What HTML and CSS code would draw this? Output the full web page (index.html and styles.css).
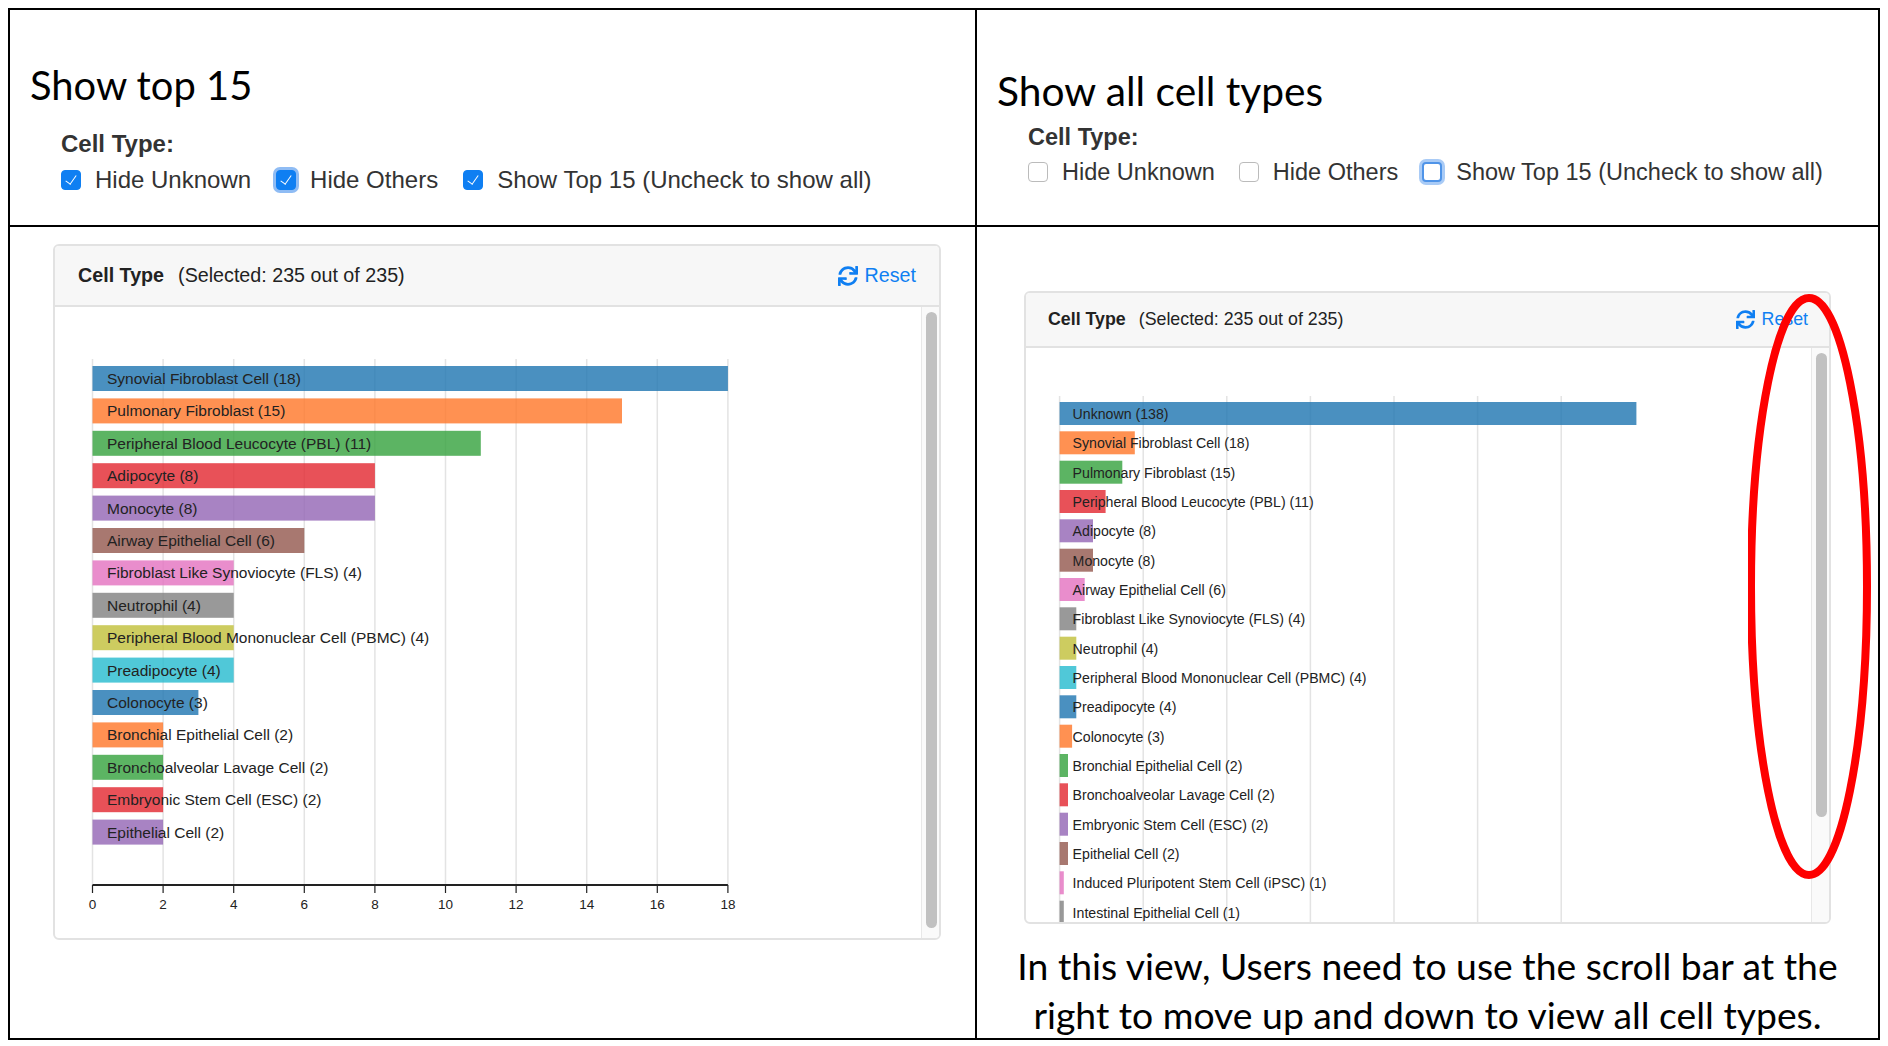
FILE: index.html
```html
<!DOCTYPE html>
<html lang="en">
<head>
    <meta charset="UTF-8">
    <title>Cell type filter</title>
    <link rel="stylesheet" href="styles.css">
</head>
<body>
    <svg width="0" height="0" class="icon-defs">
        <symbol id="icon-sync" viewBox="0 0 512 512">
            <path d="M440.65 12.57l4 82.77A247.16 247.16 0 0 0 255.83 8C134.73 8 33.91 94.92 12.29 209.82A12 12 0 0 0 24.09 224h49.05a12 12 0 0 0 11.67-9.26 175.91 175.91 0 0 1 317-56.94l-101.46-4.86a12 12 0 0 0-12.57 12v47.41a12 12 0 0 0 12 12H500a12 12 0 0 0 12-12V12a12 12 0 0 0-12-12h-47.37a12 12 0 0 0-11.98 12.57zM255.83 432a175.61 175.61 0 0 1-146-77.8l101.8 4.87a12 12 0 0 0 12.57-12v-47.4a12 12 0 0 0-12-12H12a12 12 0 0 0-12 12V500a12 12 0 0 0 12 12h47.35a12 12 0 0 0 12-12.6l-4.15-82.57A247.17 247.17 0 0 0 255.83 504c121.11 0 221.93-86.92 243.55-201.82a12 12 0 0 0-11.8-14.18h-49.05a12 12 0 0 0-11.67 9.26A175.86 175.86 0 0 1 255.83 432z"/>
        </symbol>
    </svg>

    <div class="frame">
        <section class="top top-left">
            <h1 class="title">Show top 15</h1>
            <div class="filters">
                <div class="filters-label">Cell Type:</div>
                <div class="filters-row">
                    <label class="check"><input type="checkbox" checked>Hide Unknown</label>
                    <label class="check"><input type="checkbox" class="focused" checked>Hide Others</label>
                    <label class="check"><input type="checkbox" checked>Show Top 15 (Uncheck to show all)</label>
                </div>
            </div>
        </section>

        <section class="top top-right">
            <h1 class="title">Show all cell types</h1>
            <div class="filters">
                <div class="filters-label">Cell Type:</div>
                <div class="filters-row">
                    <label class="check"><input type="checkbox">Hide Unknown</label>
                    <label class="check"><input type="checkbox">Hide Others</label>
                    <label class="check"><input type="checkbox" class="focused">Show Top 15 (Uncheck to show all)</label>
                </div>
            </div>
        </section>

        <section class="bottom bottom-left">
            <div class="card">
                <div class="card-header">
                    <span class="card-title"><b>Cell Type</b>(Selected: 235 out of 235)</span>
                    <a class="reset"><svg class="reset-icon"><use href="#icon-sync"/></svg>Reset</a>
                </div>
                <div class="card-body">
                    <svg class="chart" width="866" height="632">
                        <g transform="translate(37.5,-1)">
                            <g class="grid">
                                <line x1="0" x2="0" y1="53" y2="579"/>
                                <line x1="70.6" x2="70.6" y1="53" y2="579"/>
                                <line x1="141.2" x2="141.2" y1="53" y2="579"/>
                                <line x1="211.8" x2="211.8" y1="53" y2="579"/>
                                <line x1="282.4" x2="282.4" y1="53" y2="579"/>
                                <line x1="353" x2="353" y1="53" y2="579"/>
                                <line x1="423.6" x2="423.6" y1="53" y2="579"/>
                                <line x1="494.2" x2="494.2" y1="53" y2="579"/>
                                <line x1="564.8" x2="564.8" y1="53" y2="579"/>
                                <line x1="635.4" x2="635.4" y1="53" y2="579"/>
                            </g>
                            <g class="rows">
                                <g transform="translate(0,60)"><rect class="c0" width="635.4" height="25"/><text x="14.5" y="18">Synovial Fibroblast Cell (18)</text></g>
                                <g transform="translate(0,92.4)"><rect class="c1" width="529.5" height="25"/><text x="14.5" y="18">Pulmonary Fibroblast (15)</text></g>
                                <g transform="translate(0,124.8)"><rect class="c2" width="388.3" height="25"/><text x="14.5" y="18">Peripheral Blood Leucocyte (PBL) (11)</text></g>
                                <g transform="translate(0,157.2)"><rect class="c3" width="282.4" height="25"/><text x="14.5" y="18">Adipocyte (8)</text></g>
                                <g transform="translate(0,189.6)"><rect class="c4" width="282.4" height="25"/><text x="14.5" y="18">Monocyte (8)</text></g>
                                <g transform="translate(0,222)"><rect class="c5" width="211.8" height="25"/><text x="14.5" y="18">Airway Epithelial Cell (6)</text></g>
                                <g transform="translate(0,254.4)"><rect class="c6" width="141.2" height="25"/><text x="14.5" y="18">Fibroblast Like Synoviocyte (FLS) (4)</text></g>
                                <g transform="translate(0,286.8)"><rect class="c7" width="141.2" height="25"/><text x="14.5" y="18">Neutrophil (4)</text></g>
                                <g transform="translate(0,319.2)"><rect class="c8" width="141.2" height="25"/><text x="14.5" y="18">Peripheral Blood Mononuclear Cell (PBMC) (4)</text></g>
                                <g transform="translate(0,351.6)"><rect class="c9" width="141.2" height="25"/><text x="14.5" y="18">Preadipocyte (4)</text></g>
                                <g transform="translate(0,384)"><rect class="c0" width="105.9" height="25"/><text x="14.5" y="18">Colonocyte (3)</text></g>
                                <g transform="translate(0,416.4)"><rect class="c1" width="70.6" height="25"/><text x="14.5" y="18">Bronchial Epithelial Cell (2)</text></g>
                                <g transform="translate(0,448.8)"><rect class="c2" width="70.6" height="25"/><text x="14.5" y="18">Bronchoalveolar Lavage Cell (2)</text></g>
                                <g transform="translate(0,481.2)"><rect class="c3" width="70.6" height="25"/><text x="14.5" y="18">Embryonic Stem Cell (ESC) (2)</text></g>
                                <g transform="translate(0,513.6)"><rect class="c4" width="70.6" height="25"/><text x="14.5" y="18">Epithelial Cell (2)</text></g>
                            </g>
                            <g class="axis">
                                <line class="axis-line" x1="0" x2="635.4" y1="579" y2="579"/>
                                <g transform="translate(0,579)"><line y2="8"/><text y="24">0</text></g>
                                <g transform="translate(70.6,579)"><line y2="8"/><text y="24">2</text></g>
                                <g transform="translate(141.2,579)"><line y2="8"/><text y="24">4</text></g>
                                <g transform="translate(211.8,579)"><line y2="8"/><text y="24">6</text></g>
                                <g transform="translate(282.4,579)"><line y2="8"/><text y="24">8</text></g>
                                <g transform="translate(353,579)"><line y2="8"/><text y="24">10</text></g>
                                <g transform="translate(423.6,579)"><line y2="8"/><text y="24">12</text></g>
                                <g transform="translate(494.2,579)"><line y2="8"/><text y="24">14</text></g>
                                <g transform="translate(564.8,579)"><line y2="8"/><text y="24">16</text></g>
                                <g transform="translate(635.4,579)"><line y2="8"/><text y="24">18</text></g>
                            </g>
                        </g>
                    </svg>
                    <div class="scrollbar"><div class="scrollbar-thumb"></div></div>
                </div>
            </div>
        </section>

        <section class="bottom bottom-right">
            <div class="card">
                <div class="card-header">
                    <span class="card-title"><b>Cell Type</b>(Selected: 235 out of 235)</span>
                    <a class="reset"><svg class="reset-icon"><use href="#icon-sync"/></svg>Reset</a>
                </div>
                <div class="card-body">
                    <svg class="chart" width="785" height="574">
                        <g transform="translate(33.6,0)">
                            <g class="grid">
                                <line x1="0" x2="0" y1="48" y2="574"/>
                                <line x1="83.6" x2="83.6" y1="48" y2="574"/>
                                <line x1="167.2" x2="167.2" y1="48" y2="574"/>
                                <line x1="250.8" x2="250.8" y1="48" y2="574"/>
                                <line x1="334.4" x2="334.4" y1="48" y2="574"/>
                                <line x1="418" x2="418" y1="48" y2="574"/>
                                <line x1="501.6" x2="501.6" y1="48" y2="574"/>
                            </g>
                            <g class="rows rows-small">
                                <g transform="translate(0,54)"><rect class="c0" width="576.8" height="23"/><text x="13" y="17">Unknown (138)</text></g>
                                <g transform="translate(0,83.3)"><rect class="c1" width="75.2" height="23"/><text x="13" y="17">Synovial Fibroblast Cell (18)</text></g>
                                <g transform="translate(0,112.7)"><rect class="c2" width="62.7" height="23"/><text x="13" y="17">Pulmonary Fibroblast (15)</text></g>
                                <g transform="translate(0,142)"><rect class="c3" width="46" height="23"/><text x="13" y="17">Peripheral Blood Leucocyte (PBL) (11)</text></g>
                                <g transform="translate(0,171.3)"><rect class="c4" width="33.4" height="23"/><text x="13" y="17">Adipocyte (8)</text></g>
                                <g transform="translate(0,200.7)"><rect class="c5" width="33.4" height="23"/><text x="13" y="17">Monocyte (8)</text></g>
                                <g transform="translate(0,230)"><rect class="c6" width="25.1" height="23"/><text x="13" y="17">Airway Epithelial Cell (6)</text></g>
                                <g transform="translate(0,259.3)"><rect class="c7" width="16.7" height="23"/><text x="13" y="17">Fibroblast Like Synoviocyte (FLS) (4)</text></g>
                                <g transform="translate(0,288.7)"><rect class="c8" width="16.7" height="23"/><text x="13" y="17">Neutrophil (4)</text></g>
                                <g transform="translate(0,318)"><rect class="c9" width="16.7" height="23"/><text x="13" y="17">Peripheral Blood Mononuclear Cell (PBMC) (4)</text></g>
                                <g transform="translate(0,347.3)"><rect class="c0" width="16.7" height="23"/><text x="13" y="17">Preadipocyte (4)</text></g>
                                <g transform="translate(0,376.7)"><rect class="c1" width="12.5" height="23"/><text x="13" y="17">Colonocyte (3)</text></g>
                                <g transform="translate(0,406)"><rect class="c2" width="8.4" height="23"/><text x="13" y="17">Bronchial Epithelial Cell (2)</text></g>
                                <g transform="translate(0,435.3)"><rect class="c3" width="8.4" height="23"/><text x="13" y="17">Bronchoalveolar Lavage Cell (2)</text></g>
                                <g transform="translate(0,464.7)"><rect class="c4" width="8.4" height="23"/><text x="13" y="17">Embryonic Stem Cell (ESC) (2)</text></g>
                                <g transform="translate(0,494)"><rect class="c5" width="8.4" height="23"/><text x="13" y="17">Epithelial Cell (2)</text></g>
                                <g transform="translate(0,523.3)"><rect class="c6" width="4.2" height="23"/><text x="13" y="17">Induced Pluripotent Stem Cell (iPSC) (1)</text></g>
                                <g transform="translate(0,552.7)"><rect class="c7" width="4.2" height="23"/><text x="13" y="17">Intestinal Epithelial Cell (1)</text></g>
                            </g>
                        </g>
                    </svg>
                    <div class="scrollbar"><div class="scrollbar-thumb"></div></div>
                </div>
            </div>
            <p class="note">In this view, Users need to use the scroll bar at the<br>right to move up and down to view all cell types.</p>
            <svg class="callout" width="124" height="590">
                <ellipse cx="61" cy="292.5" rx="58" ry="288.5"/>
            </svg>
        </section>
    </div>
</body>
</html>
```

FILE: styles.css
```css
body {
    margin: 0;
    background: #fff;
    color: #222;
    font-family: "Liberation Sans", Arial, sans-serif;
}

.icon-defs {
    display: block;
}

.frame {
    position: relative;
    display: grid;
    grid-template-columns: 967px 901px;
    grid-template-rows: 217px 811px;
    width: 1868px;
    margin: 8px 0 0 8px;
    border: 2px solid #000;
}

.top {
    border-bottom: 2px solid #000;
}

.top-left,
.bottom-left {
    border-right: 2px solid #000;
}

.title {
    margin: 0;
    font-family: Lato, "Open Sans", sans-serif;
    font-size: 39.9px;
    font-weight: 400;
    line-height: 48px;
    color: #000;
}

.top-right .title {
    font-size: 40.7px;
}

.top-left {
    padding: 51px 0 0 20px;
}

.top-right {
    padding: 57px 0 0 20px;
}

.filters {
    margin-left: 31px;
    margin-top: 20px;
}

.top-right .filters {
    margin-top: 7px;
}

.filters-label {
    font-size: 24px;
    font-weight: bold;
    line-height: 30px;
    color: #333;
}

.top-right .filters-label {
    font-size: 23.5px;
}

.filters-row {
    display: flex;
    gap: 25px;
    margin-top: 5px;
}

.top-right .filters-row {
    gap: 24px;
    margin-top: 4px;
}

.check {
    display: flex;
    align-items: center;
    gap: 14px;
    font-size: 24px;
    line-height: 32px;
    color: #333;
}

.top-right .check {
    font-size: 23.5px;
}

.check input {
    appearance: none;
    position: relative;
    width: 20px;
    height: 20px;
    margin: 0;
    border: 1px solid #bbb;
    border-radius: 4px;
    background: #fff;
}

.check input:checked {
    border-color: #0f7ff2;
    background: #0f7ff2;
}

.check input:checked::after {
    content: "";
    position: absolute;
    left: 6px;
    top: 2px;
    width: 5px;
    height: 10px;
    border: solid #fff;
    border-width: 0 1.5px 1.5px 0;
    transform: rotate(35deg);
}

.check input.focused {
    border: 2px solid #4f94e8;
    box-shadow: 0 0 0 3px #a9cbf6;
}

.check input.focused:checked {
    border: 1px solid #0f7ff2;
    box-shadow: 0 0 0 3px #8fbcf4;
}

.bottom {
    position: relative;
}

.bottom-left {
    padding: 17px 0 0 43px;
}

.bottom-right {
    padding: 64px 0 0 47px;
}

.card {
    display: flex;
    flex-direction: column;
    box-sizing: border-box;
    border: 2px solid #e2e2e2;
    border-radius: 6px;
    overflow: hidden;
    background: #fff;
}

.bottom-left .card {
    width: 888px;
    height: 696px;
}

.bottom-right .card {
    width: 807px;
    height: 633px;
}

.card-header {
    display: flex;
    align-items: center;
    justify-content: space-between;
    box-sizing: border-box;
    background: #f7f7f7;
    border-bottom: 2px solid #e2e2e2;
    flex-shrink: 0;
}

.bottom-left .card-header {
    height: 61px;
    padding: 0 23px;
    font-size: 19.7px;
}

.bottom-right .card-header {
    height: 55px;
    padding: 0 21px 0 22px;
    font-size: 17.8px;
}

.card-title b {
    margin-right: 14px;
}

.bottom-right .card-title b {
    margin-right: 13px;
}

.reset {
    display: flex;
    align-items: center;
    gap: 7px;
    color: #0f7ff2;
}

.reset-icon {
    width: 20px;
    height: 20px;
    fill: currentColor;
}

.bottom-right .reset-icon {
    width: 19px;
    height: 19px;
}

.card-body {
    display: flex;
    flex: 1;
    min-height: 0;
    justify-content: space-between;
}

.chart {
    flex-shrink: 0;
}

.grid line {
    stroke: #e3e3e3;
    stroke-width: 1.5;
}

.rows rect {
    fill-opacity: 0.8;
}

.rows text {
    font-size: 15.5px;
    fill: #222;
}

.rows-small text {
    font-size: 14.15px;
}

.c0 { fill: #1d74b0; }
.c1 { fill: #ff7527; }
.c2 { fill: #33a13c; }
.c3 { fill: #e2252e; }
.c4 { fill: #9264b4; }
.c5 { fill: #92564c; }
.c6 { fill: #e370bf; }
.c7 { fill: #7f7f7f; }
.c8 { fill: #c0bf38; }
.c9 { fill: #24bace; }

.axis line {
    stroke: #222;
    stroke-width: 1.2;
}

.axis .axis-line {
    stroke-width: 2;
}

.axis text {
    font-size: 13.5px;
    text-anchor: middle;
    fill: #222;
}

.scrollbar {
    box-sizing: border-box;
    width: 20px;
    flex-shrink: 0;
    padding: 5px 4px 0;
    background: #fafafa;
    border-left: 1px solid #e8e8e8;
}

.scrollbar-thumb {
    border-radius: 6px;
    background: #c1c1c1;
}

.bottom-left .scrollbar-thumb {
    height: 616px;
}

.bottom-right .scrollbar-thumb {
    height: 464px;
}

.note {
    margin: 0 0 0 -47px;
    width: 901px;
    padding-top: 17px;
    font-family: Lato, "Open Sans", sans-serif;
    font-size: 37.3px;
    line-height: 49px;
    text-align: center;
    color: #000;
}

/* hand drawn circle around the scrollbar */
.callout {
    position: absolute;
    left: 771px;
    top: 67px;
}

.callout ellipse {
    fill: none;
    stroke: #fe0000;
    stroke-width: 8;
}
```
